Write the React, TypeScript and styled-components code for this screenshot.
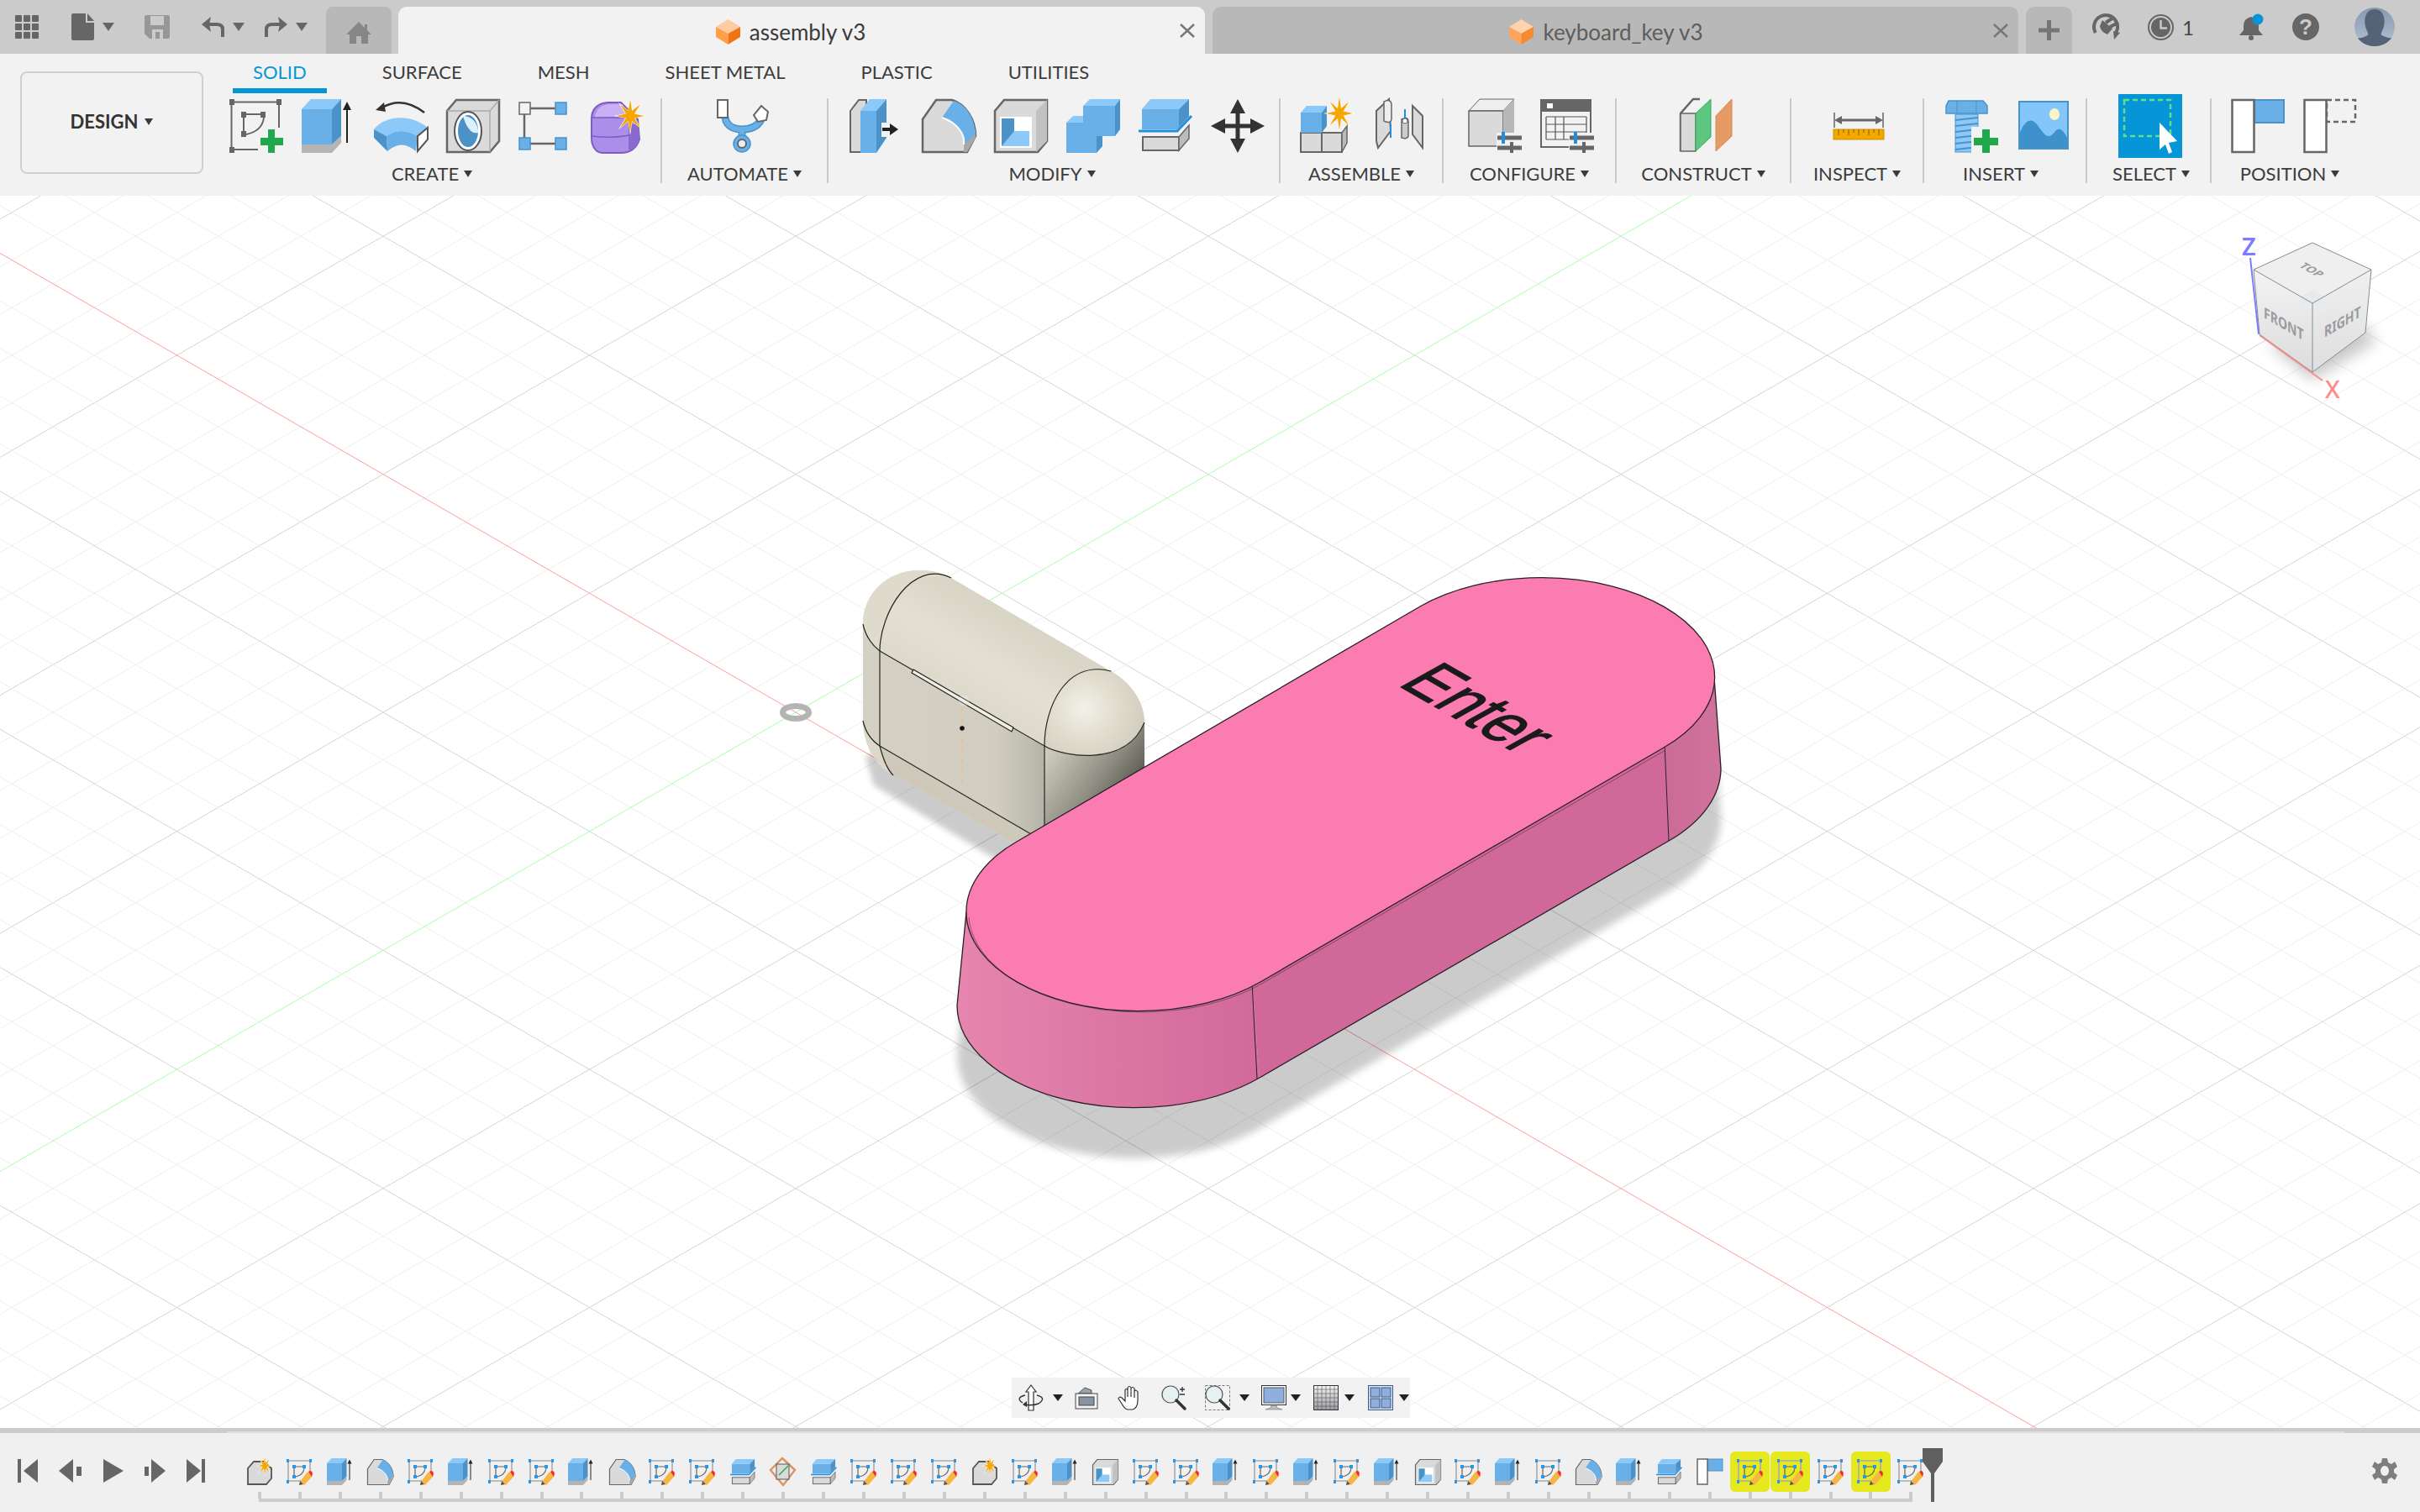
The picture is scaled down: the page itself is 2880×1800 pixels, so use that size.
import React from 'react';
import styled, { createGlobalStyle } from 'styled-components';

const BLUE = '#6ab0e8';
const BLUE_DARK = '#4a92c8';
const BLUE_LIGHT = '#8cc8f8';
const GREY = '#666666';
const FACE = '#dadada';
const GREEN = '#22a84c';
const STAR = '#f7a600';

const GlobalStyle = createGlobalStyle`
  html, body {
    margin: 0;
    padding: 0;
    background: #ffffff;
    overflow: hidden;
  }
  body {
    font-family: Lato, "Open Sans", sans-serif;
  }
`;

const Page = styled.div`
  width: 2880px;
  height: 1800px;
  display: flex;
  flex-direction: column;
  overflow: hidden;
`;

/* ---------- title bar ---------- */

const TitleBar = styled.div`
  height: 64px;
  background: #cbcbcb;
  display: flex;
  align-items: flex-end;
  flex-shrink: 0;
`;

const QuickTools = styled.div`
  width: 388px;
  height: 64px;
  padding-left: 18px;
  box-sizing: border-box;
  display: flex;
  align-items: center;
`;

const ToolGroup = styled.div<{ $ml?: number }>`
  display: flex;
  align-items: center;
  gap: 10px;
  margin-left: ${(p) => p.$ml ?? 0}px;
`;

const Caret = styled.span<{ $w?: number; $h?: number; $color?: string }>`
  display: inline-block;
  flex-shrink: 0;
  border-left: ${(p) => (p.$w ?? 11) / 2}px solid transparent;
  border-right: ${(p) => (p.$w ?? 11) / 2}px solid transparent;
  border-top: ${(p) => p.$h ?? 8}px solid ${(p) => p.$color ?? '#3a3a3a'};
`;

const HomeTab = styled.div`
  width: 78px;
  height: 56px;
  background: #b8b8b8;
  border-radius: 8px 8px 0 0;
  display: flex;
  align-items: flex-end;
  justify-content: center;
  padding-bottom: 12px;
  box-sizing: border-box;
`;

const DocTab = styled.div<{ $active?: boolean; $width: number }>`
  position: relative;
  width: ${(p) => p.$width}px;
  height: 56px;
  margin-left: ${(p) => (p.$active ? 8 : 9)}px;
  background: ${(p) => (p.$active ? '#f2f2f2' : '#b8b8b8')};
  border-radius: 10px 10px 0 0;
  display: flex;
  align-items: center;
  justify-content: center;
  gap: 11px;
  padding: 4px ${(p) => (p.$active ? 26 : 22)}px 0 0;
  box-sizing: border-box;
  font-size: 26px;
  color: ${(p) => (p.$active ? '#3b3b3b' : '#5d5d5d')};
`;

const TabClose = styled.svg`
  position: absolute;
  right: 12px;
  top: 20px;
`;

const PlusTab = styled.div`
  width: 55px;
  height: 56px;
  margin-left: 9px;
  background: #b8b8b8;
  border-radius: 10px 10px 0 0;
  display: flex;
  align-items: center;
  justify-content: center;
`;

const AccountTools = styled.div`
  flex: 1;
  height: 64px;
  display: flex;
  align-items: center;
  padding-left: 25px;
`;

const ClockCount = styled.span`
  margin-left: 10px;
  width: 10px;
  font-size: 24px;
  color: #444;
`;

/* ---------- toolbar ---------- */

const Toolbar = styled.div`
  height: 169px;
  background: #f2f2f2;
  display: flex;
  flex-shrink: 0;
`;

const DesignButton = styled.div`
  width: 218px;
  height: 122px;
  margin: 21px 0 0 24px;
  padding-bottom: 3px;
  box-sizing: border-box;
  border: 2px solid #d0d0d0;
  border-radius: 8px;
  display: flex;
  align-items: center;
  justify-content: center;
  gap: 8px;
  font-size: 22px;
  font-weight: 700;
  color: #333;
`;

const ToolColumn = styled.div`
  flex: 1;
  display: flex;
  flex-direction: column;
`;

const ModeTabs = styled.div`
  height: 47px;
  padding-left: 35px;
  display: flex;
  gap: 42px;
`;

const ModeTab = styled.div<{ $active?: boolean }>`
  height: 47px;
  box-sizing: border-box;
  padding: 8px 24px 0;
  font-size: 22px;
  line-height: 28px;
  white-space: nowrap;
  color: ${(p) => (p.$active ? '#0696d7' : '#3c3c3c')};
  border-bottom: 6px solid ${(p) => (p.$active ? '#0696d7' : 'transparent')};
`;

const Groups = styled.div`
  display: flex;
  margin-top: 6px;
`;

const Group = styled.div<{ $width: number; $last?: boolean }>`
  width: ${(p) => p.$width}px;
  height: 101px;
  box-sizing: border-box;
  border-right: 2px solid ${(p) => (p.$last ? 'transparent' : '#c9c9c9')};
  display: flex;
  flex-direction: column;
  align-items: center;
`;

const GroupIcons = styled.div<{ $shift?: number }>`
  height: 64px;
  margin-top: 1px;
  margin-left: ${(p) => p.$shift ?? 0}px;
  display: flex;
  align-items: center;
  gap: 22px;
`;

const GroupLabel = styled.div<{ $shift?: number }>`
  margin-top: 12px;
  margin-left: ${(p) => p.$shift ?? 0}px;
  display: flex;
  align-items: center;
  gap: 6px;
  font-size: 22px;
  line-height: 26px;
  color: #3c3c3c;
  white-space: nowrap;
`;

/* ---------- viewport ---------- */

const Viewport = styled.div`
  position: relative;
  flex: 1;
  background: #ffffff;
  overflow: hidden;
`;

const Scene = styled.svg`
  position: absolute;
  inset: 0;
  display: block;
`;

const NavBar = styled.div`
  position: absolute;
  bottom: 12px;
  left: 1204px;
  width: 474px;
  height: 48px;
  box-sizing: border-box;
  padding-left: 8px;
  background: #f2f2f2;
  display: flex;
  align-items: center;
`;

const NavGroup = styled.div<{ $ml?: number; $gap?: number }>`
  display: flex;
  align-items: center;
  gap: ${(p) => p.$gap ?? 11}px;
  margin-left: ${(p) => p.$ml ?? 0}px;
`;

/* ---------- timeline ---------- */

const ScrollStrip = styled.div`
  height: 6px;
  display: flex;
  flex-shrink: 0;
`;

const ScrollThumb = styled.div<{ $width: number }>`
  width: ${(p) => p.$width}px;
  background: #cccccc;
`;

const ScrollTrack = styled.div`
  flex: 1;
  border-top: 4px solid #cccccc;
  background: #dedede;
`;

const Timeline = styled.div`
  height: 94px;
  background: #f0f0f0;
  display: flex;
  flex-shrink: 0;
`;

const PlayControls = styled.div`
  width: 285px;
  height: 94px;
  box-sizing: border-box;
  padding: 0 0 5px 21px;
  display: flex;
  align-items: center;
  gap: 25px;
  flex-shrink: 0;
`;

const Track = styled.div`
  position: relative;
  display: flex;
  padding-top: 22px;
  height: 82px;
  box-sizing: border-box;
  &::after {
    content: '';
    position: absolute;
    left: 23px;
    right: 22px;
    bottom: 0;
    height: 4px;
    background: #cccccc;
  }
`;

const TrackItem = styled.div`
  width: 47.95px;
  display: flex;
  flex-direction: column;
  align-items: center;
`;

const TrackIcon = styled.div<{ $highlight?: boolean }>`
  width: 47px;
  height: 48px;
  display: flex;
  align-items: center;
  justify-content: center;
  border-radius: 6px;
  background: ${(p) => (p.$highlight ? '#e6e91e' : 'transparent')};
`;

const TrackTick = styled.div`
  width: 4px;
  height: 8px;
  background: #cccccc;
`;

const TrackMarker = styled.svg`
  position: absolute;
  top: 18px;
  left: 2003px;
`;

const SettingsGear = styled.div`
  margin-left: auto;
  padding: 0 27px 5px 0;
  display: flex;
  align-items: center;
`;

const Glyph = styled.svg`
  display: block;
  flex-shrink: 0;
  overflow: visible;
`;

/* ---------- helpers ---------- */

const burst = (cx: number, cy: number, rx: number, ry: number, n = 8) => {
  const pts: string[] = [];
  for (let i = 0; i < n * 2; i++) {
    const a = (Math.PI * i) / n - Math.PI / 2;
    const k = i % 2 === 0 ? 1 : 0.32;
    pts.push(`${(cx + Math.cos(a) * rx * k).toFixed(1)},${(cy + Math.sin(a) * ry * k).toFixed(1)}`);
  }
  return pts.join(' ');
};

type IconProps = { size?: number };

const Icon = ({ size = 64, children }: IconProps & { children: React.ReactNode }) => (
  <Glyph width={size} height={size} viewBox="0 0 64 64">
    {children}
  </Glyph>
);

const Star = ({ cx, cy, rx, ry }: { cx: number; cy: number; rx: number; ry: number }) => (
  <>
    <polygon points={burst(cx, cy, rx + 3, ry + 3)} fill="#fff" />
    <polygon points={burst(cx, cy, rx, ry)} fill={STAR} />
  </>
);

/* ---------- title bar icons ---------- */

const AppsIcon = () => (
  <Glyph width={28} height={28} viewBox="0 0 28 28">
    {[0, 10, 20].map((y) =>
      [0, 10, 20].map((x) => <rect key={`${x}-${y}`} x={x} y={y} width={8} height={8} rx={1} fill={GREY} />),
    )}
  </Glyph>
);

const FileIcon = () => (
  <Glyph width={27} height={32} viewBox="0 0 27 32">
    <path d="M2 0H17V11H27V30a2 2 0 0 1-2 2H2a2 2 0 0 1-2-2V2a2 2 0 0 1 2-2Z" fill={GREY} />
    <path d="M19 0L27 9H19Z" fill={GREY} />
  </Glyph>
);

const SaveIcon = () => (
  <Glyph width={30} height={28} viewBox="0 0 30 28">
    <path d="M2 0H28a2 2 0 0 1 2 2V26a2 2 0 0 1-2 2H6L0 22V2a2 2 0 0 1 2-2Z" fill="#979797" />
    <rect x={7} y={1} width={16} height={11} fill="#cbcbcb" />
    <rect x={9} y={17} width={13} height={11} fill="#cbcbcb" />
    <rect x={13} y={20} width={5} height={8} fill="#979797" />
  </Glyph>
);

const TurnIcon = ({ flip, color }: { flip?: boolean; color: string }) => (
  <Glyph width={27} height={24} viewBox="0 0 27 24">
    <g transform={flip ? 'translate(27 0) scale(-1 1)' : undefined}>
      <path d="M25 24V15Q25 9 18 9H8" fill="none" stroke={color} strokeWidth={4} />
      <path d="M11 0L0 9L11 18L9 9Z" fill={color} />
    </g>
  </Glyph>
);

const HomeIcon = () => (
  <Glyph width={30} height={26} viewBox="0 0 30 26">
    <path d="M15 0L22 7V3H25V10L30 15H26V26H18V17H12V26H4V15H0Z" fill="#868686" />
  </Glyph>
);

const CubeIcon = ({ muted }: { muted?: boolean }) => (
  <Glyph width={29} height={30} viewBox="0 0 29 30">
    <polygon points="14.5,0 29,9 14.5,17 0,9" fill={muted ? '#ffd3ac' : '#ffcba0'} />
    <polygon points="0,9 14.5,17 14.5,30 0,21" fill={muted ? '#ffa45a' : '#ff9f4a'} />
    <polygon points="29,9 14.5,17 14.5,30 29,21" fill={muted ? '#f58a2e' : '#f07510'} />
  </Glyph>
);

const CloseGlyph = () => (
  <TabClose width={18} height={17} viewBox="0 0 18 17">
    <path d="M1 1L17 16M17 1L1 16" stroke="#777" strokeWidth={2.4} />
  </TabClose>
);

const PlusGlyph = () => (
  <Glyph width={25} height={24} viewBox="0 0 25 24">
    <path d="M10 0h5v9.500h10v5H15V24h-5V14.500H0v-5h10Z" fill="#767676" />
  </Glyph>
);

const ReconnectIcon = () => (
  <Glyph width={32} height={30} viewBox="0 0 32 30">
    <circle cx={15} cy={15} r={14} fill="none" stroke={GREY} strokeWidth={4} strokeDasharray="58 30" transform="rotate(150 15 15)" />
    <path d="M11 7L23 17L17 24Q9 21 8 14Z" fill={GREY} />
    <path d="M15 10L24 4M20 15L30 10" stroke={GREY} strokeWidth={4} />
    <polygon points="24,20 32,22 25,30" fill={GREY} />
  </Glyph>
);

const ClockIcon = () => (
  <Glyph width={31} height={31} viewBox="0 0 31 31">
    <ellipse cx={15.500} cy={15.500} rx={14.500} ry={14.500} fill="none" stroke={GREY} strokeWidth={2} />
    <circle cx={15.500} cy={15.500} r={11.500} fill={GREY} />
    <path d="M15.500 7V16.500H23" fill="none" stroke="#cbcbcb" strokeWidth={2.400} />
  </Glyph>
);

const BellIcon = () => (
  <Glyph width={31} height={32} viewBox="0 0 31 32">
    <path d="M15 4Q24 6 24 15V20L29 26H1L6 20V15Q6 6 15 4Z" fill={GREY} />
    <circle cx={15} cy={29} r={3} fill={GREY} />
    <circle cx={23} cy={7} r={6.500} fill="#0696d7" />
  </Glyph>
);

const HelpIcon = () => (
  <Glyph width={32} height={32} viewBox="0 0 32 32">
    <circle cx={16} cy={16} r={16} fill={GREY} />
    <text x={16} y={25} textAnchor="middle" fontFamily="Liberation Sans, sans-serif" fontWeight="700" fontSize={26} fill="#cbcbcb">
      ?
    </text>
  </Glyph>
);

const AvatarIcon = () => (
  <Glyph width={48} height={48} viewBox="0 0 50 48">
    <defs>
      <linearGradient id="avatarBg" x1="0" y1="0" x2="0" y2="1">
        <stop offset="0" stopColor="#8798b0" />
        <stop offset="1" stopColor="#b4c0d0" />
      </linearGradient>
    </defs>
    <ellipse cx={25} cy={24} rx={25} ry={24} fill="url(#avatarBg)" />
    <path d="M25 2C35 2 38 12 37 20C36 28 33 30 33 34C38 37 44 38 46 38C40 45 33 48 25 48C17 48 10 45 4 38C8 38 13 37 17 34C17 30 14 28 13 20C12 12 15 2 25 2Z" fill="#546377" />
  </Glyph>
);

/* ---------- toolbar icons ---------- */

const SketchIcon = () => (
  <Icon>
    <g fill={GREY}>
      <rect x={0} y={0} width={6} height={7} />
      <rect x={56} y={0} width={6} height={7} />
      <rect x={0} y={57} width={6} height={7} />
      <rect x={14} y={15} width={6} height={7} />
      <rect x={37} y={15} width={6} height={7} />
      <rect x={14} y={38} width={6} height={7} />
    </g>
    <path d="M6 3.500H56M2.500 7V57M6 60H34M59 7V34M20 18H37M17 22V38M41 22Q39 38 20 42" fill="none" stroke={GREY} strokeWidth={2} />
    <rect x={46} y={36} width={8} height={28} fill={GREEN} />
    <rect x={37} y={46} width={27} height={9} fill={GREEN} />
  </Icon>
);

const ExtrudeIcon = ({ size = 64 }: IconProps) => (
  <Icon size={size}>
    <polygon points="0,12 11,0 47,0 36,12" fill={BLUE_LIGHT} />
    <rect x={0} y={12} width={36} height={42} fill={BLUE} />
    <polygon points="36,12 47,0 47,44 36,54" fill={BLUE_DARK} />
    <polygon points="0,54 36,54 47,44 47,52 36,64 0,64" fill="#b4b4b4" />
    <path d="M54 52V8" stroke="#222" strokeWidth={2} />
    <polygon points="54,3 49,13 59,13" fill="#222" />
  </Icon>
);

const RevolveIcon = () => (
  <Icon>
    <path d="M60 16Q34 -4 10 10" fill="none" stroke="#333" strokeWidth={2.500} />
    <polygon points="2,13 12,4 14,15" fill="#333" />
    <path d="M0 36C14 18 46 18 64 34L52 44C38 36 26 36 15 44Z" fill={BLUE_LIGHT} />
    <path d="M15 44C26 36 38 36 52 44L50 62C38 52 28 52 16 62Z" fill={BLUE} />
    <path d="M0 36L15 44L16 62L0 46Z" fill={BLUE_DARK} />
    <path d="M52 44L64 34V48L52 62Z" fill="#fff" stroke="#555" strokeWidth={2} />
  </Icon>
);

const HoleIcon = () => (
  <Icon>
    <path d="M1 14L12 1H63V50L52 63H1Z" fill={FACE} stroke={GREY} strokeWidth={2.500} />
    <path d="M1 14H52L63 1M52 14V63" fill="none" stroke="#aaa" strokeWidth={1.500} />
    <ellipse cx={26} cy={38} rx={16} ry={23} fill="#fff" stroke="#555" strokeWidth={2} />
    <ellipse cx={26} cy={38} rx={12} ry={19} fill={BLUE_DARK} />
    <path d="M20 20C28 20 38 26 38 40C30 42 24 34 20 20Z" fill="#dff0fb" />
  </Icon>
);

const PatternIcon = () => (
  <Icon>
    <path d="M14 11H44M7 18V46M14 53H44" stroke={GREY} strokeWidth={2.500} />
    <rect x={1} y={4} width={13} height={14} fill="#f2f2f2" stroke={GREY} strokeWidth={1.500} />
    <rect x={44} y={4} width={13} height={14} fill={BLUE} stroke={BLUE_DARK} strokeWidth={1.500} />
    <rect x={1} y={46} width={13} height={14} fill={BLUE} stroke={BLUE_DARK} strokeWidth={1.500} />
    <rect x={44} y={46} width={13} height={14} fill={BLUE} stroke={BLUE_DARK} strokeWidth={1.500} />
  </Icon>
);

const FormIcon = () => (
  <Icon>
    <path d="M1 24C1 10 10 5 20 4H36L56 24L58 48C54 60 46 64 36 64H14C6 64 1 56 1 46Z" fill="#ab8dea" stroke="#7d5cc4" strokeWidth={2} />
    <path d="M5 22C6 12 12 7 22 6H38L42 20Z" fill="#c9b0f5" />
    <path d="M2 44C14 46 34 46 50 42M2 22H44M46 22V60" fill="none" stroke="#7d5cc4" strokeWidth={1.500} />
    <path d="M48 30H58V48C56 56 50 60 46 61Z" fill="#8a6ad0" />
    <Star cx={47} cy={20} rx={17} ry={20} />
  </Icon>
);

const AutomateIcon = () => (
  <Icon>
    <path d="M9 22C11 34 22 36 29 36C36 36 46 34 51 26M29 36V50" fill="none" stroke={BLUE_DARK} strokeWidth={9} strokeLinecap="round" />
    <path d="M9 22C11 34 22 36 29 36C36 36 46 34 51 26M29 36V50" fill="none" stroke={BLUE} strokeWidth={6} strokeLinecap="round" />
    <rect x={0} y={1} width={12} height={21} fill="#fff" stroke={GREY} strokeWidth={2} />
    <polygon points="52,8 60,15 58,25 48,27 43,19" fill="#fff" stroke={GREY} strokeWidth={2} />
    <circle cx={29} cy={53} r={10} fill={BLUE} stroke={BLUE_DARK} strokeWidth={1.500} />
    <circle cx={29} cy={53} r={5} fill="#eee" stroke={GREY} strokeWidth={2} />
  </Icon>
);

const PressPullIcon = () => (
  <Icon>
    <path d="M1 63V14L11 1H20V63Z" fill={FACE} stroke={GREY} strokeWidth={2} />
    <polygon points="13,14 24,0 44,0 32,14" fill={BLUE_LIGHT} />
    <rect x={13} y={14} width={19} height={50} fill={BLUE} />
    <polygon points="32,14 44,0 44,46 32,64" fill={BLUE_DARK} />
    <rect x={38} y={28} width={20} height={17} fill="#f2f2f2" />
    <path d="M39 36H50" stroke="#222" strokeWidth={4} />
    <polygon points="48,29 58,36 48,43" fill="#222" />
  </Icon>
);

const FilletIcon = ({ size = 64 }: IconProps) => (
  <Icon size={size}>
    <path d="M1 63V24L17 1H36C52 6 64 24 64 44L54 63Z" fill={FACE} stroke={GREY} strokeWidth={2.500} />
    <path d="M50 63V50L64 36V46L54 63Z" fill="#a8a8a8" />
    <path d="M24 22L38 2C54 7 63 24 64 42L50 54C52 42 42 28 24 22Z" fill={BLUE} />
    <path d="M24 22C42 28 52 42 50 54" fill="none" stroke="#fff" strokeWidth={2} />
  </Icon>
);

const ShellIcon = ({ size = 64 }: IconProps) => (
  <Icon size={size}>
    <path d="M1 14L12 1H63V50L52 63H1Z" fill={FACE} stroke={GREY} strokeWidth={2.500} />
    <polygon points="50,14 63,1 63,50 50,63" fill="#c2c2c2" />
    <rect x={7} y={21} width={38} height={37} fill="#fff" />
    <polygon points="9,23 24,23 24,44 9,56" fill={BLUE_DARK} />
    <polygon points="9,56 24,38 42,38 42,56" fill={BLUE_LIGHT} />
  </Icon>
);

const CombineIcon = () => (
  <Icon>
    <rect x={20} y={8} width={38} height={36} fill={BLUE} />
    <polygon points="20,8 28,0 64,0 58,8" fill={BLUE_LIGHT} />
    <polygon points="58,8 64,0 64,36 58,44" fill={BLUE_DARK} />
    <rect x={0} y={28} width={36} height={36} fill={BLUE} />
    <polygon points="0,28 8,20 20,20 20,28" fill={BLUE_LIGHT} />
    <polygon points="36,44 43,44 43,56 36,64" fill={BLUE_DARK} />
  </Icon>
);

const SplitIcon = ({ size = 64 }: IconProps) => (
  <Icon size={size}>
    <rect x={5} y={45} width={43} height={16} fill={FACE} stroke={GREY} strokeWidth={2} />
    <polygon points="48,45 60,31 60,47 48,61" fill="#bbb" stroke={GREY} strokeWidth={1.500} />
    <rect x={4} y={12} width={44} height={24} fill={BLUE} />
    <polygon points="4,12 14,0 60,0 48,12" fill={BLUE_LIGHT} />
    <polygon points="48,12 60,0 60,22 48,36" fill={BLUE_DARK} />
    <polyline points="0,40 46,40 63,22" fill="none" stroke="#f2f2f2" strokeWidth={6} />
    <polyline points="0,38 46,38 63,20" fill="none" stroke="#1e90e0" strokeWidth={3} />
  </Icon>
);

const MoveIcon = () => (
  <Icon>
    <path d="M32 0L41 17H34.500V29.500H47V23L64 32L47 41V34.500H34.500V47H41L32 64L23 47H29.500V34.500H17V41L0 32L17 23V29.500H29.500V17H23Z" fill="#333" />
  </Icon>
);

const AssembleIcon = () => (
  <Icon>
    <rect x={1} y={40} width={25} height={23} fill={FACE} stroke={GREY} strokeWidth={2} />
    <rect x={26} y={40} width={24} height={23} fill={FACE} stroke={GREY} strokeWidth={2} />
    <polygon points="50,40 56,32 56,52 50,63" fill="#bbb" stroke={GREY} strokeWidth={1.500} />
    <polygon points="1,16 8,8 32,8 26,16" fill={BLUE_LIGHT} />
    <rect x={1} y={16} width={25} height={24} fill={BLUE} />
    <polygon points="26,16 32,8 32,32 26,40" fill={BLUE_DARK} />
    <Star cx={47} cy={17} rx={16} ry={20} />
  </Icon>
);

const JointIcon = () => (
  <Icon>
    <g transform="translate(4 0)">
      <path d="M1 50V14L16 0L18 38L3 58Z" fill={FACE} stroke={GREY} strokeWidth={2} />
      <path d="M10 3Q18 -1 19 6V24Q18 30 10 26Z" fill="#eee" stroke={GREY} strokeWidth={1.500} />
      <path d="M56 20V58L44 42V8Z" fill={FACE} stroke={GREY} strokeWidth={2} />
      <path d="M31 24Q38 20 39 26V44Q38 48 31 46Z" fill="#ccc" stroke={GREY} strokeWidth={1.500} />
      <path d="M35 12V26M18 30V46" stroke="#1e90e0" strokeWidth={2} />
      <circle cx={35} cy={26} r={3} fill="#fff" stroke={GREY} />
    </g>
  </Icon>
);

const Sliders = () => (
  <>
    <path d="M35 46H64M35 58H64" stroke={GREY} strokeWidth={5} />
    <rect x={40} y={39} width={4} height={14} fill="#1e90e0" />
    <rect x={50} y={51} width={4} height={13} fill={GREY} />
  </>
);

const ConfigBoxIcon = () => (
  <Icon>
    <polygon points="1,14 14,0 55,0 42,14" fill="#eee" stroke={GREY} strokeWidth={1} />
    <rect x={1} y={14} width={41} height={42} fill={FACE} stroke={GREY} strokeWidth={1.500} />
    <polygon points="42,14 55,0 55,40 42,56" fill="#b8b8b8" />
    <rect x={34} y={40} width={30} height={24} fill="#f2f2f2" />
    <Sliders />
  </Icon>
);

const ConfigTableIcon = () => (
  <Icon>
    <rect x={1} y={1} width={59} height={56} fill="#f2f2f2" stroke={GREY} strokeWidth={2} />
    <rect x={0} y={0} width={61} height={15} fill={GREY} />
    <rect x={8} y={5} width={7} height={6} fill="#fff" />
    <path d="M7 21H55M7 30H55M7 39H55M7 48H36M7 21V48M18 21V48M28 21V48M55 21V40" fill="none" stroke="#555" strokeWidth={1.200} />
    <rect x={34} y={40} width={30} height={24} fill="#f2f2f2" />
    <Sliders />
  </Icon>
);

const ConstructIcon = () => (
  <Icon>
    <path d="M1 62V17L16 0H24" fill="none" stroke={GREY} strokeWidth={2.500} />
    <rect x={1} y={17} width={18} height={45} fill={FACE} stroke={GREY} strokeWidth={1.500} />
    <polygon points="19,17 37,0 37,45 19,62" fill="#5ec77f" stroke="#37a85c" strokeWidth={1} />
    <polygon points="43,20 62,0 62,44 43,62" fill="#e69a66" stroke="#d98850" strokeWidth={1} />
  </Icon>
);

const InspectIcon = () => (
  <Icon>
    <path d="M1 16V34M59 16V34" stroke={GREY} strokeWidth={1.500} />
    <path d="M8 25H52" stroke={GREY} strokeWidth={3} />
    <polygon points="1,25 10,20 10,30" fill={GREY} />
    <polygon points="59,25 50,20 50,30" fill={GREY} />
    <rect x={0} y={36} width={60} height={12} fill="#f3a800" stroke="#d68f00" strokeWidth={1} />
    {[6, 12, 18, 24, 30, 36, 42, 48, 54].map((x, i) => (
      <path key={x} d={`M${x} 36V${i % 2 === 0 ? 43 : 40}`} stroke="#8a5c00" strokeWidth={1} />
    ))}
  </Icon>
);

const BoltIcon = () => (
  <Icon>
    <rect x={11} y={18} width={27} height={45} fill={BLUE_LIGHT} stroke={BLUE_DARK} strokeWidth={1} />
    {[22, 29, 36, 43, 50, 57].map((y) => (
      <path key={y} d={`M11 ${y + 3}L38 ${y}`} stroke={BLUE_DARK} strokeWidth={2} />
    ))}
    <path d="M3 2H44L49 8V17H0V8Z" fill={BLUE} stroke={BLUE_DARK} strokeWidth={1.500} />
    <path d="M13 2V17M36 2V17" stroke={BLUE_DARK} strokeWidth={1} />
    <rect x={30} y={33} width={34} height={31} fill="#f2f2f2" />
    <rect x={43} y={36} width={9} height={28} fill={GREEN} />
    <rect x={33} y={46} width={29} height={9} fill={GREEN} />
  </Icon>
);

const PictureIcon = () => (
  <Icon>
    <rect x={1} y={3} width={58} height={56} fill="#85c6fa" stroke={BLUE_DARK} strokeWidth={2} />
    <ellipse cx={43} cy={18} rx={6} ry={7} fill="#fbf6c8" />
    <path d="M2 40C8 24 16 22 22 30C28 38 32 44 36 44C42 44 44 34 50 36C54 38 56 42 58 46V58H2Z" fill="#3f91cc" />
  </Icon>
);

const SelectIcon = () => (
  <Glyph width={76} height={76} viewBox="0 0 76 76">
    <rect width={76} height={76} fill="#0696d7" />
    <rect x={7} y={7} width={55} height={43} fill="none" stroke="#5fe08a" strokeWidth={2.500} strokeDasharray="6 4" />
    <path d="M49 34V66L56 60L60 71L64 69L60 58L70 56Z" fill="#fff" />
  </Glyph>
);

const PositionIcon = ({ ghost }: { ghost?: boolean }) => (
  <Icon>
    {ghost ? (
      <rect x={28} y={1} width={34} height={26} fill="none" stroke={GREY} strokeWidth={2.500} strokeDasharray="6 4" />
    ) : (
      <rect x={28} y={1} width={35} height={27} fill={BLUE} stroke={BLUE_DARK} strokeWidth={2} />
    )}
    <rect x={1.500} y={1} width={26} height={62} fill="#fff" stroke={GREY} strokeWidth={2.500} />
  </Icon>
);

/* ---------- timeline icons ---------- */

const SketchEditIcon = () => (
  <Glyph width={32} height={32} viewBox="0 0 32 32">
    <path d="M2 3H28M2 3V27M2 27H18M28 3V16" fill="none" stroke="#aaa" strokeWidth={1.600} />
    <g fill="#2a96e6">
      <rect x={0} y={1} width={3} height={4} />
      <rect x={27} y={1} width={3} height={4} />
      <rect x={0} y={26} width={3} height={4} />
      <rect x={7} y={8} width={4} height={4} />
      <rect x={19} y={8} width={4} height={4} />
      <rect x={7} y={20} width={4} height={4} />
    </g>
    <path d="M11 10H19M9 12V20M21 12Q20 20 11 22" fill="none" stroke="#666" strokeWidth={1.200} />
    <path d="M25 16L31 21L21 32L16 28Z" fill="#f5b642" />
    <path d="M26 16Q30 13 31 18L30 22Z" fill="#ee2c2c" />
    <polygon points="16,27 20,31 15,32" fill="#555" />
  </Glyph>
);

const StarBoxIcon = () => (
  <Glyph width={30} height={32} viewBox="0 0 30 32">
    <path d="M1 31V12L8 4H20L29 12V24L23 31Z" fill={FACE} stroke="#555" strokeWidth={1.800} />
    <polygon points={burst(21, 9, 10, 13)} fill="#fff" />
    <polygon points={burst(21, 9, 8, 11)} fill={STAR} />
  </Glyph>
);

const DiamondIcon = () => (
  <Glyph width={30} height={32} viewBox="0 0 30 32">
    <polygon points="14,0 29,14 15,32 0,14" fill="none" stroke="#dd9566" strokeWidth={2.400} />
    <rect x={7} y={7} width={15} height={18} fill={FACE} stroke="#555" />
    <path d="M10 20L21 9" stroke={GREEN} strokeWidth={1.500} />
  </Glyph>
);

const FlagSmallIcon = () => (
  <Glyph width={32} height={32} viewBox="0 0 32 32">
    <rect x={13} y={1} width={18} height={14} fill={BLUE} stroke={BLUE_DARK} />
    <rect x={1} y={1} width={12} height={30} fill="#fff" stroke={GREY} strokeWidth={1.500} />
  </Glyph>
);

type TrackKind = 'star' | 'sketch' | 'extrude' | 'fillet' | 'split' | 'diamond' | 'shell' | 'flag';

const renderTrackIcon = (kind: TrackKind) => {
  switch (kind) {
    case 'star':
      return <StarBoxIcon />;
    case 'sketch':
      return <SketchEditIcon />;
    case 'extrude':
      return <ExtrudeIcon size={32} />;
    case 'fillet':
      return <FilletIcon size={31} />;
    case 'split':
      return <SplitIcon size={31} />;
    case 'diamond':
      return <DiamondIcon />;
    case 'shell':
      return <ShellIcon size={31} />;
    default:
      return <FlagSmallIcon />;
  }
};

const TRACK: { kind: TrackKind; highlight?: boolean }[] = [
  { kind: 'star' }, { kind: 'sketch' }, { kind: 'extrude' }, { kind: 'fillet' }, { kind: 'sketch' },
  { kind: 'extrude' }, { kind: 'sketch' }, { kind: 'sketch' }, { kind: 'extrude' }, { kind: 'fillet' },
  { kind: 'sketch' }, { kind: 'sketch' }, { kind: 'split' }, { kind: 'diamond' }, { kind: 'split' },
  { kind: 'sketch' }, { kind: 'sketch' }, { kind: 'sketch' }, { kind: 'star' }, { kind: 'sketch' },
  { kind: 'extrude' }, { kind: 'shell' }, { kind: 'sketch' }, { kind: 'sketch' }, { kind: 'extrude' },
  { kind: 'sketch' }, { kind: 'extrude' }, { kind: 'sketch' }, { kind: 'extrude' }, { kind: 'shell' },
  { kind: 'sketch' }, { kind: 'extrude' }, { kind: 'sketch' }, { kind: 'fillet' }, { kind: 'extrude' },
  { kind: 'split' }, { kind: 'flag' }, { kind: 'sketch', highlight: true }, { kind: 'sketch', highlight: true },
  { kind: 'sketch' }, { kind: 'sketch', highlight: true }, { kind: 'sketch' },
];

const PlayGlyph = ({ d, w }: { d: string; w: number }) => (
  <Glyph width={w} height={28} viewBox={`0 0 ${w} 28`}>
    <path d={d} fill={GREY} />
  </Glyph>
);

const GearIcon = () => (
  <Glyph width={30} height={30} viewBox="0 0 30 30">
    <path d="M12 0H18L19 5L23 7L27 4L30 10L26 13V17L30 20L27 26L23 23L19 25L18 30H12L11 25L7 23L3 26L0 20L4 17V13L0 10L3 4L7 7L11 5Z" fill="#7e7e7e" />
    <ellipse cx={15} cy={15} rx={5} ry={6} fill="#f0f0f0" />
  </Glyph>
);

/* ---------- navigation bar icons ---------- */

const OrbitIcon = () => (
  <Glyph width={30} height={30} viewBox="0 0 30 30">
    <path d="M15 0L21 8H18V30H12V8H9Z" fill="#fff" stroke="#333" strokeWidth={1.200} />
    <path d="M5 21Q-4 15 8 12M22 12Q34 15 24 22Q16 25 6 23" fill="none" stroke="#333" strokeWidth={1.400} />
    <polygon points="5,23 10,19 10,26" fill="#333" />
  </Glyph>
);

const FrameIcon = () => (
  <Glyph width={28} height={28} viewBox="0 0 28 28">
    <polygon points="4,9 12,2 20,5 20,9" fill="#9ba4ad" stroke="#555" />
    <rect x={1} y={9} width={26} height={18} fill="#f5f5f5" stroke="#444" />
    <rect x={5} y={13} width={18} height={10} fill="#8a94a0" stroke="#444" />
  </Glyph>
);

const HandIcon = () => (
  <Glyph width={30} height={30} viewBox="0 0 30 30">
    <path d="M9 19V6Q10 3 12 6V14V3Q14 0 16 3V14V4Q18 1 20 4V15V7Q22 5 24 8V18Q24 27 18 29H12Q8 28 5 22L1 16Q2 13 5 15Z" fill="#fff" stroke="#333" strokeWidth={1.200} />
  </Glyph>
);

const Lens = () => (
  <>
    <circle cx={11} cy={11} r={10} fill="#e6f2f2" stroke="#555" strokeWidth={1.200} />
    <path d="M18 18L28 28" stroke="#333" strokeWidth={3.500} strokeLinecap="round" />
  </>
);

const ZoomIcon = () => (
  <Glyph width={30} height={30} viewBox="0 0 30 30">
    <Lens />
    <path d="M25 2V8M22 5H28M22 11H28" stroke="#333" strokeWidth={1.300} />
  </Glyph>
);

const ZoomWindowIcon = () => (
  <Glyph width={30} height={30} viewBox="0 0 30 30">
    <rect x={0.500} y={0.500} width={29} height={29} fill="none" stroke="#777" strokeDasharray="3 2" />
    <Lens />
  </Glyph>
);

const DisplayIcon = () => (
  <Glyph width={30} height={30} viewBox="0 0 30 30">
    <rect x={0.500} y={0.500} width={29} height={23} fill="#fff" stroke="#333" />
    <rect x={3} y={3} width={24} height={18} fill="#90afdc" stroke="#556" />
    <polygon points="12,24 18,24 19,27 25,29 5,29 11,27" fill="#bbb" stroke="#777" strokeWidth={0.600} />
  </Glyph>
);

const GridIcon = () => (
  <Glyph width={30} height={30} viewBox="0 0 30 30">
    <defs>
      <linearGradient id="gridFade" x1="0" y1="0" x2="0" y2="1">
        <stop offset="0" stopColor="#f5f5f5" />
        <stop offset="1" stopColor="#9a9ca2" />
      </linearGradient>
    </defs>
    <rect x={0.500} y={0.500} width={29} height={29} fill="url(#gridFade)" stroke="#333" />
    {[5, 10, 15, 20, 25].map((p) => (
      <path key={p} d={`M${p} 0V30M0 ${p}H30`} stroke="#555" strokeWidth={0.600} />
    ))}
  </Glyph>
);

const ViewportsIcon = () => (
  <Glyph width={30} height={30} viewBox="0 0 30 30">
    <rect x={0.500} y={0.500} width={29} height={29} fill="#dbe6f2" stroke="#3a5a88" />
    {[
      [3, 3],
      [16, 3],
      [3, 16],
      [16, 16],
    ].map(([x, y]) => (
      <rect key={`${x}-${y}`} x={x} y={y} width={11} height={11} fill="#8faedb" stroke="#3a5a88" />
    ))}
  </Glyph>
);

/* ---------- 3D scene ---------- */

const OX = 947;
const OY = 848;
const SLOPE = 141.7 / 245.5;
const STEP = 56.68;

const GridLines = () => {
  const rows = [];
  for (let k = -40; k <= 40; k++) {
    if (k === 0) continue;
    const major = k % 5 === 0;
    const stroke = major ? '#d4d4d4' : '#eeeeee';
    const off = k * STEP;
    rows.push(
      <line key={`r${k}`} x1={0} y1={OY - OX * SLOPE + off} x2={2880} y2={OY + (2880 - OX) * SLOPE + off} stroke={stroke} />,
      <line key={`g${k}`} x1={0} y1={OY + OX * SLOPE + off} x2={2880} y2={OY - (2880 - OX) * SLOPE + off} stroke={stroke} />,
    );
  }
  return <>{rows}</>;
};

const SceneDefs = () => (
  <defs>
    <filter id="blurSoft" x="-20%" y="-20%" width="140%" height="140%">
      <feGaussianBlur stdDeviation="5" />
    </filter>
    <filter id="blurTight" x="-20%" y="-20%" width="140%" height="140%">
      <feGaussianBlur stdDeviation="3.5" />
    </filter>
    <filter id="blurWide" x="-40%" y="-40%" width="180%" height="180%">
      <feGaussianBlur stdDeviation="9" />
    </filter>
    <linearGradient id="keyLeft" gradientUnits="userSpaceOnUse" x1="1140" y1="0" x2="1495" y2="0">
      <stop offset="0" stopColor="#e685ae" />
      <stop offset="1" stopColor="#d2699b" />
    </linearGradient>
    <linearGradient id="keyRight" gradientUnits="userSpaceOnUse" x1="1980" y1="0" x2="2048" y2="0">
      <stop offset="0" stopColor="#cb6a97" />
      <stop offset="1" stopColor="#d0739c" />
    </linearGradient>
    <linearGradient id="caseFront" gradientUnits="userSpaceOnUse" x1="1047" y1="0" x2="1243" y2="0">
      <stop offset="0" stopColor="#d4d1c4" />
      <stop offset="0.7" stopColor="#d1cec1" />
      <stop offset="1" stopColor="#b6b4a8" />
    </linearGradient>
    <linearGradient id="caseSide" gradientUnits="userSpaceOnUse" x1="1250" y1="895" x2="1345" y2="965">
      <stop offset="0" stopColor="#cdcabd" />
      <stop offset="0.55" stopColor="#8f8e82" />
      <stop offset="1" stopColor="#4a4a42" />
    </linearGradient>
    <radialGradient id="caseDome" gradientUnits="userSpaceOnUse" cx="1290" cy="843" r="90">
      <stop offset="0" stopColor="#f3f1ea" />
      <stop offset="0.4" stopColor="#e1decf" />
      <stop offset="0.85" stopColor="#d0cdbf" />
      <stop offset="1" stopColor="#aaa89c" />
    </radialGradient>
    <linearGradient id="caseTop" gradientUnits="userSpaceOnUse" x1="1180" y1="860" x2="1240" y2="760">
      <stop offset="0" stopColor="#dcd9cb" />
      <stop offset="0.5" stopColor="#e3e0d3" />
      <stop offset="1" stopColor="#d8d5c7" />
    </linearGradient>
    <linearGradient id="cubeLeft" x1="0" y1="0" x2="0" y2="1">
      <stop offset="0" stopColor="#f3f3f3" />
      <stop offset="1" stopColor="#dcdcdc" />
    </linearGradient>
    <linearGradient id="cubeRight" x1="0" y1="0" x2="0" y2="1">
      <stop offset="0" stopColor="#f0f0f0" />
      <stop offset="1" stopColor="#dedede" />
    </linearGradient>
  </defs>
);

const KEY_BOTTOM = 'M1139 1197A211 122 0 0 0 1499 1283L1986 1001A211 122 0 0 0 2048 915L2040 806L1150 1086Z';

const EarbudCase = () => (
  <g>
    <path d="M1027 743C1027 705 1058 679 1093 679C1110 679 1122 682 1132 688L1322 799C1345 812 1362 835 1362 860V930L1240 1010L1210 1005L1063 923C1040 910 1027 885 1027 858Z" fill="url(#caseTop)" />
    <path d="M1047 888L1227 993L1243 985L1243 1010L1210 1005L1063 923C1055 915 1050 900 1047 888Z" fill="#cdcabc" />
    <path d="M1047 775L1243 888V985L1227 993L1047 888Z" fill="url(#caseFront)" />
    <path d="M1027 743C1030 757 1038 768 1047 775V888C1038 878 1030 870 1027 858Z" fill="#d4d1c4" />
    <path d="M1243 888C1262 900 1340 915 1362 860V925L1243 1000Z" fill="url(#caseSide)" />
    <path d="M1243 888C1243 840 1270 795 1310 798C1316 798 1320 798 1322 799C1345 812 1362 835 1362 860C1340 915 1262 900 1243 888Z" fill="url(#caseDome)" />
    <path d="M1027 743C1030 757 1038 768 1047 775C1047 730 1075 676 1132 688C1122 682 1110 679 1093 679C1058 679 1027 705 1027 743Z" fill="#dedbcd" />
    <g fill="none" stroke="#26261f" strokeWidth={1.200}>
      <path d="M1027 743C1030 757 1038 768 1047 775V888C1050 900 1055 915 1063 923" />
      <path d="M1047 775C1047 730 1085 665 1132 688" />
      <path d="M1047 775L1243 888V985" />
      <path d="M1243 888C1243 840 1270 785 1322 799" strokeLinecap="round" />
      <path d="M1243 888C1262 900 1340 915 1362 860" />
      <path d="M1047 888L1227 993" />
      <path d="M1027 858C1030 872 1038 882 1047 888" />
    </g>
    <path d="M1087 797L1206 866L1204 871L1085 801Z" fill="#efece0" stroke="#222" strokeWidth={1.200} />
    <path d="M1145 842V940" stroke="#e6c29c" strokeWidth={1.800} strokeDasharray="7 5" />
    <circle cx={1145} cy={867} r={2.800} fill="#111" />
    <circle cx={1147} cy={834} r={7} fill="#ffffff" opacity={0.25} stroke="#999" strokeWidth={0.500} />
    <path d="M1027 894L1210 1000" stroke="#ff9a9a" strokeWidth={1} opacity={0.35} />
  </g>
);

const EnterKey = () => (
  <g>
    <path d="M1150 1086L1139 1197A211 122 0 0 0 1499 1283L1490 1169A205 118 0 0 1 1150 1086Z" fill="url(#keyLeft)" />
    <path d="M1490 1169L1499 1283L1986 1001L1981 886Z" fill="#d1689a" />
    <path d="M1981 886L1986 1001A211 122 0 0 0 2048 915L2040 806A205 118 0 0 1 1981 886Z" fill="url(#keyRight)" />
    <path d="M1150 1086L1139 1197A211 122 0 0 0 1499 1283L1986 1001A211 122 0 0 0 2048 915L2040 806" fill="none" stroke="#2b2028" strokeWidth={1.300} />
    <path d="M1490 1169L1496 1284M1981 886L1986 1001" stroke="#2b2028" strokeWidth={1} />
    <path d="M1210 1002L1690 722A205 118 0 0 1 1980 890L1500 1169A205 118 0 0 1 1210 1002Z" fill="#fa7cb1" stroke="#2b2028" strokeWidth={1.300} />
    <path d="M1153 1092A205 118 0 0 0 1500 1172L1982 893" fill="none" stroke="#2b2028" strokeWidth={0.800} opacity={0.6} />
    <text transform="matrix(0.61 0.352 -0.754 0.42 1662 815)" fontFamily="Liberation Sans, Arial, sans-serif" fontSize={100} fill="#1a1a1a" stroke="#1a1a1a" strokeWidth={1.500}>
      Enter
    </text>
  </g>
);

const ViewCube = () => (
  <g>
    <path d="M2700 410L2752 452L2830 405L2800 380Z" fill="#000" opacity={0.22} filter="url(#blurWide)" />
    <polygon points="2752,289 2822,321 2752,361 2682,321" fill="#efefef" />
    <polygon points="2682,321 2752,361 2752,443 2689,398" fill="url(#cubeLeft)" />
    <polygon points="2752,361 2822,321 2815,396 2752,443" fill="url(#cubeRight)" />
    <polygon points="2752,345 2767,353 2767,369 2752,377 2738,369 2738,353" fill="#e8eaee" />
    <path d="M2682 321L2752 289L2822 321L2815 396L2752 443L2689 398ZM2682 321L2752 361L2822 321M2752 361V443" fill="none" stroke="#8a8a8a" strokeWidth={1} />
    <g fontFamily="Noto Sans, Open Sans, sans-serif" fontWeight="700" fill="#9a9c9e">
      <text transform="matrix(0.6 0.34 -0.6 0.34 2735 317)" fontSize={20}>TOP</text>
      <text transform="matrix(0.78 0.45 0 1 2694 378)" fontSize={18}>FRONT</text>
      <text transform="matrix(0.78 -0.45 0 1 2766 402)" fontSize={18}>RIGHT</text>
    </g>
    <path d="M2678 307L2688 398" stroke="#7b7bff" strokeWidth={2} />
    <path d="M2689 399L2764 453" stroke="#f58f8f" strokeWidth={2} />
    <text x={2668} y={304} fontFamily="Noto Sans, sans-serif" fontWeight="600" fontSize={29} fill="#7b7bff">Z</text>
    <text x={2767} y={474} fontFamily="Noto Sans, sans-serif" fontWeight="500" fontSize={29} fill="#ff8a8a">X</text>
  </g>
);

const Stage = () => (
  <Scene width={2880} height={1467} viewBox="0 233 2880 1467">
    <SceneDefs />
    <GridLines />
    <path d={`M${0} ${OY - OX * SLOPE}L2880 ${OY + (2880 - OX) * SLOPE}`} stroke="#ff9c9c" />
    <path d={`M${0} ${OY + OX * SLOPE}L2880 ${OY - (2880 - OX) * SLOPE}`} stroke="#a8ffa8" />
    <ellipse cx={OX} cy={OY} rx={15.500} ry={7.500} fill="none" stroke="#b4b4b4" strokeWidth={7} />
    <path d="M1030 900L1040 935L1183 1022L1250 1030L1260 1000L1060 890Z" fill="#000" opacity={0.2} filter="url(#blurTight)" />
    <path d={KEY_BOTTOM} transform="translate(0 60)" fill="#000" opacity={0.2} filter="url(#blurSoft)" />
    <EarbudCase />
    <EnterKey />
    <ViewCube />
  </Scene>
);

/* ---------- page ---------- */

const MODES = ['SOLID', 'SURFACE', 'MESH', 'SHEET METAL', 'PLASTIC', 'UTILITIES'];

const GROUPS: { label: string; width: number; shift?: number; labelShift?: number; icons: React.ReactNode[] }[] = [
  {
    label: 'CREATE',
    width: 546,
    shift: 12,
    icons: [<SketchIcon />, <ExtrudeIcon />, <RevolveIcon />, <HoleIcon />, <PatternIcon />, <FormIcon />],
  },
  { label: 'AUTOMATE', width: 198, icons: [<AutomateIcon />] },
  {
    label: 'MODIFY',
    width: 538,
    shift: 8,
    labelShift: -4,
    icons: [<PressPullIcon />, <FilletIcon />, <ShellIcon />, <CombineIcon />, <SplitIcon />, <MoveIcon />],
  },
  { label: 'ASSEMBLE', width: 194, shift: 4, icons: [<AssembleIcon />, <JointIcon />] },
  { label: 'CONFIGURE', width: 206, shift: 4, icons: [<ConfigBoxIcon />, <ConfigTableIcon />] },
  { label: 'CONSTRUCT', width: 208, shift: 8, icons: [<ConstructIcon />] },
  { label: 'INSPECT', width: 158, shift: 8, icons: [<InspectIcon />] },
  { label: 'INSERT', width: 194, shift: 10, labelShift: -10, icons: [<BoltIcon />, <PictureIcon />] },
  { label: 'SELECT', width: 148, shift: 4, labelShift: 6, icons: [<SelectIcon />] },
  { label: 'POSITION', width: 188, shift: 10, icons: [<PositionIcon />, <PositionIcon ghost />] },
];

function App() {
  return (
    <Page>
      <GlobalStyle />
      <TitleBar>
        <QuickTools>
          <AppsIcon />
          <ToolGroup $ml={39}>
            <FileIcon />
            <Caret $w={15} $h={10} $color={GREY} />
          </ToolGroup>
          <ToolGroup $ml={36}>
            <SaveIcon />
          </ToolGroup>
          <ToolGroup $ml={38}>
            <TurnIcon color={GREY} />
            <Caret $w={15} $h={10} $color={GREY} />
          </ToolGroup>
          <ToolGroup $ml={24}>
            <TurnIcon flip color={GREY} />
            <Caret $w={15} $h={10} $color={GREY} />
          </ToolGroup>
        </QuickTools>
        <HomeTab>
          <HomeIcon />
        </HomeTab>
        <DocTab $active $width={960}>
          <CubeIcon />
          assembly v3
          <CloseGlyph />
        </DocTab>
        <DocTab $width={959}>
          <CubeIcon muted />
          keyboard_key v3
          <CloseGlyph />
        </DocTab>
        <PlusTab>
          <PlusGlyph />
        </PlusTab>
        <AccountTools>
          <ReconnectIcon />
          <ToolGroup $ml={33}>
            <ClockIcon />
          </ToolGroup>
          <ClockCount>1</ClockCount>
          <ToolGroup $ml={57}>
            <BellIcon />
          </ToolGroup>
          <ToolGroup $ml={33}>
            <HelpIcon />
          </ToolGroup>
          <ToolGroup $ml={42}>
            <AvatarIcon />
          </ToolGroup>
        </AccountTools>
      </TitleBar>

      <Toolbar>
        <DesignButton>
          DESIGN
          <Caret />
        </DesignButton>
        <ToolColumn>
          <ModeTabs>
            {MODES.map((mode, i) => (
              <ModeTab key={mode} $active={i === 0}>
                {mode}
              </ModeTab>
            ))}
          </ModeTabs>
          <Groups>
            {GROUPS.map((group, i) => (
              <Group key={group.label} $width={group.width} $last={i === GROUPS.length - 1}>
                <GroupIcons $shift={group.shift}>
                  {group.icons.map((icon, j) => (
                    <React.Fragment key={j}>{icon}</React.Fragment>
                  ))}
                </GroupIcons>
                <GroupLabel $shift={group.labelShift}>
                  {group.label}
                  <Caret />
                </GroupLabel>
              </Group>
            ))}
          </Groups>
        </ToolColumn>
      </Toolbar>

      <Viewport>
        <Stage />
        <NavBar>
          <NavGroup>
            <OrbitIcon />
            <Caret $w={12} $h={8} $color="#222" />
          </NavGroup>
          <NavGroup $ml={14}>
            <FrameIcon />
          </NavGroup>
          <NavGroup $ml={23}>
            <HandIcon />
          </NavGroup>
          <NavGroup $ml={22}>
            <ZoomIcon />
          </NavGroup>
          <NavGroup $ml={22}>
            <ZoomWindowIcon />
            <Caret $w={12} $h={8} $color="#222" />
          </NavGroup>
          <NavGroup $ml={14} $gap={5}>
            <DisplayIcon />
            <Caret $w={12} $h={8} $color="#222" />
          </NavGroup>
          <NavGroup $ml={15} $gap={7}>
            <GridIcon />
            <Caret $w={12} $h={8} $color="#222" />
          </NavGroup>
          <NavGroup $ml={16} $gap={7}>
            <ViewportsIcon />
            <Caret $w={12} $h={8} $color="#222" />
          </NavGroup>
        </NavBar>
      </Viewport>

      <ScrollStrip>
        <ScrollThumb $width={270} />
        <ScrollTrack />
        <ScrollThumb $width={90} />
      </ScrollStrip>

      <Timeline>
        <PlayControls>
          <PlayGlyph w={24} d="M0 0H4V28H0ZM24 0V28L7 14Z" />
          <PlayGlyph w={28} d="M17 0V28L0 14ZM21 9H27V20H21Z" />
          <PlayGlyph w={24} d="M0 0L24 14L0 28Z" />
          <PlayGlyph w={25} d="M8 0V28L25 14ZM0 9H5V20H0Z" />
          <PlayGlyph w={22} d="M0 0V28L17 14ZM18 0H22V28H18Z" />
        </PlayControls>
        <Track>
          {TRACK.map((item, i) => (
            <TrackItem key={i}>
              <TrackIcon $highlight={item.highlight}>{renderTrackIcon(item.kind)}</TrackIcon>
              <TrackTick />
            </TrackItem>
          ))}
          <TrackMarker width={24} height={64} viewBox="0 0 24 64">
            <path d="M0 0H24V16L14 30V64H10V30L0 16Z" fill="#5f5f5f" />
          </TrackMarker>
        </Track>
        <SettingsGear>
          <GearIcon />
        </SettingsGear>
      </Timeline>
    </Page>
  );
}

export default App;
